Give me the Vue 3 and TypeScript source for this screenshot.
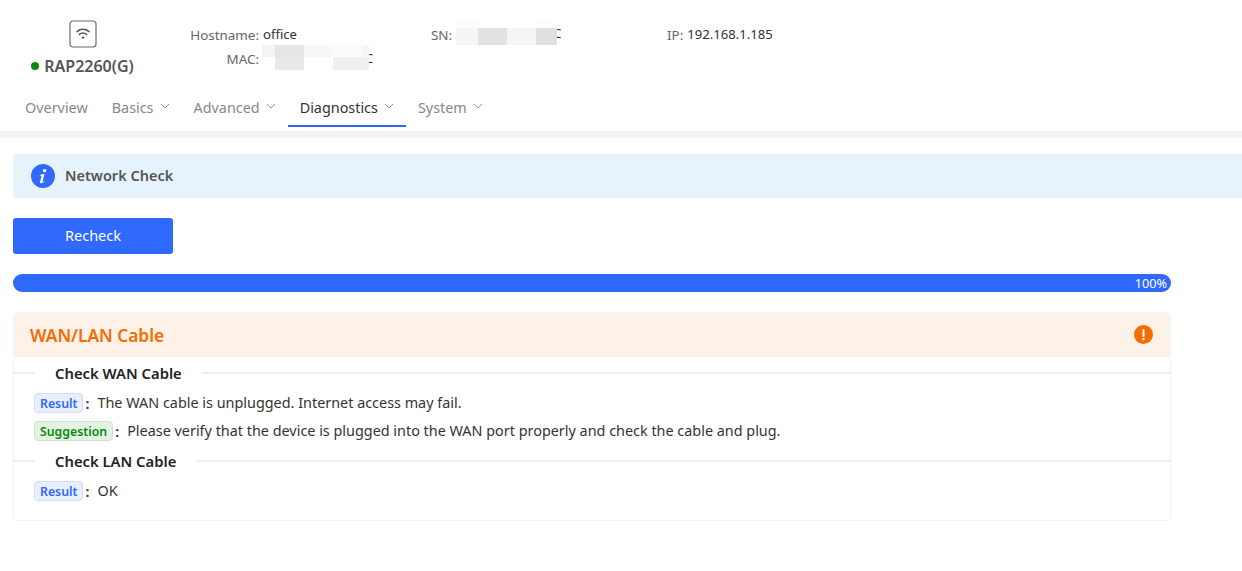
<script setup lang="ts">
const tabs = [
  { label: 'Overview', caret: false, active: false },
  { label: 'Basics', caret: true, active: false },
  { label: 'Advanced', caret: true, active: false },
  { label: 'Diagnostics', caret: true, active: true },
  { label: 'System', caret: true, active: false },
]
interface Cell { x: number; y: number; w: number; h: number; c: string }
const macCells: Cell[] = [
  { x: 0, y: 0, w: 13, h: 12, c: '#f4f4f4' },
  { x: 13, y: 0, w: 29, h: 12, c: '#e6e6e6' },
  { x: 13, y: 12, w: 29, h: 13, c: '#e9e9e9' },
  { x: 42, y: 0, w: 29, h: 12, c: '#f8f8f8' },
  { x: 71, y: 0, w: 29, h: 12, c: '#fcfcfc' },
  { x: 71, y: 12, w: 36, h: 13, c: '#efefef' },
  { x: 100, y: 0, w: 7, h: 12, c: '#f6f6f6' },
]
const snCells: Cell[] = [
  { x: 0, y: 0, w: 22, h: 8, c: '#fcfcfc' },
  { x: 0, y: 8, w: 22, h: 17, c: '#f5f5f5' },
  { x: 22, y: 8, w: 29, h: 17, c: '#e2e2e2' },
  { x: 51, y: 8, w: 29, h: 17, c: '#f5f5f5' },
  { x: 80, y: 0, w: 21, h: 8, c: '#fdfdfd' },
  { x: 80, y: 8, w: 21, h: 17, c: '#e0e0e0' },
]
const cellStyle = (c: Cell) => ({
  left: c.x + 'px', top: c.y + 'px', width: c.w + 'px', height: c.h + 'px', background: c.c,
})
</script>

<template>
  <div class="page">
    <header class="top">
      <div class="info">
        <div class="device">
          <span class="device-icon">
            <svg width="28" height="28" viewBox="0 0 28 28" fill="none">
              <rect x="1" y="1" width="26" height="26" rx="3" stroke="#6b6b6b" stroke-width="1.2" />
              <path d="M8 11.6c3.6-3 8.4-3 12 0" stroke="#555" stroke-width="1.6" stroke-linecap="round" />
              <path d="M10.4 14.4c2.2-1.7 5-1.7 7.2 0" stroke="#555" stroke-width="1.6" stroke-linecap="round" />
              <circle cx="14" cy="17.6" r="1.2" fill="#555" />
            </svg>
          </span>
          <div class="model"><i class="dot"></i>RAP2260(G)</div>
        </div>
        <div class="fields">
          <div class="field f-host"><span class="k">Hostname:</span><span class="v">office</span></div>
          <div class="field f-sn">
            <span class="k">SN:</span>
            <span class="mosaic sn"><b>C</b><i v-for="(c, n) in snCells" :key="n" :style="cellStyle(c)"></i></span>
          </div>
          <div class="field f-ip"><span class="k">IP:</span><span class="v">192.168.1.185</span></div>
          <div class="field f-mac">
            <span class="k">MAC:</span>
            <span class="mosaic mac"><b>C</b><i v-for="(c, n) in macCells" :key="n" :style="cellStyle(c)"></i></span>
          </div>
        </div>
      </div>
      <nav class="tabs">
        <div v-for="t in tabs" :key="t.label" class="tab" :class="{ active: t.active }">
          {{ t.label }}
          <svg v-if="t.caret" class="caret" width="10" height="6" viewBox="0 0 10 6" fill="none">
            <path d="M1 1l4 4 4-4" stroke="currentColor" stroke-width="1" />
          </svg>
        </div>
      </nav>
    </header>
    <div class="strip"></div>
    <main class="content">
      <div class="alert">
        <svg width="24" height="24" viewBox="0 0 24 24">
          <circle cx="12" cy="12" r="12" fill="#2f69fe" />
          <circle cx="13.6" cy="6.6" r="1.7" fill="#fff" />
          <path d="M9.6 10.6l3.9-.6-2 7.4c-.1.5.3.6.7.3l1.2-1 .4.4c-1.100 1.300-2.200 2.200-3.600 2.200-1 0-1.400-.7-1.100-1.800l1.500-5.400-1.100.1z" fill="#fff" />
        </svg>
        <span>Network Check</span>
      </div>
      <button class="btn" type="button">Recheck</button>
      <div class="progress"><span>100%</span></div>
      <section class="card">
        <div class="card-head">
          <span>WAN/LAN Cable</span>
          <svg width="19" height="19" viewBox="0 0 19 19">
            <circle cx="9.500" cy="9.500" r="9.500" fill="#f56c00" />
            <rect x="8.500" y="4" width="2" height="8" rx="1" fill="#fff" />
            <circle cx="9.500" cy="14" r="1.200" fill="#fff" />
          </svg>
        </div>
        <div class="legend"><span>Check WAN Cable</span></div>
        <div class="line">
          <span class="tag blue">Result</span><b class="colon">:</b>
          <span>The WAN cable is unplugged. Internet access may fail.</span>
        </div>
        <div class="line">
          <span class="tag green">Suggestion</span><b class="colon">:</b>
          <span>Please verify that the device is plugged into the WAN port properly and check the cable and plug.</span>
        </div>
        <div class="legend second"><span>Check LAN Cable</span></div>
        <div class="line last">
          <span class="tag blue">Result</span><b class="colon">:</b>
          <span>OK</span>
        </div>
      </section>
    </main>
  </div>
</template>

<style>
html, body { margin: 0; background: #fff; }
</style>

<style scoped>
.page {
  width: 1242px;
  height: 571px;
  overflow: hidden;
  background: #fff;
  font-family: "Noto Sans", "Noto Sans CJK SC", sans-serif;
  font-size: 14px;
  color: #333;
}
.top { height: 131px; display: flex; flex-direction: column; box-sizing: border-box; padding-top: 20px; }
.info { display: flex; height: 68px; }
.device { width: 165px; display: flex; flex-direction: column; align-items: center; }
.device-icon { display: block; height: 28px; }
.model { margin-top: 8px; font-size: 16px; font-weight: 600; color: #555; line-height: 20px; display: flex; align-items: center; }
.dot { width: 8px; height: 8px; border-radius: 50%; background: #0a8a0a; margin-right: 5px; }
.fields {
  display: grid;
  grid-template-columns: 266px 236px auto;
  grid-template-rows: 24px 25px;
  align-content: start;
  margin-top: 2px;
}
.field { display: flex; line-height: 24px; font-size: 13.100px; color: #333; white-space: nowrap; }
.k { color: #666; width: 94px; text-align: right; margin-right: 4px; flex: none; position: relative; top: 1px; font-size: 13.400px; }
.f-sn .k, .f-ip .k { width: auto; margin-right: 4px; }
.f-mac { grid-column: 1; grid-row: 2; }
.mosaic { position: relative; display: block; height: 25px; flex: none; top: -2px; }
.mosaic i { position: absolute; display: block; }
.mosaic b { position: absolute; top: 1px; font-weight: 400; font-size: 13px; line-height: 25px; }
.mac { width: 111px; margin-left: -1px; top: -1px; }
.mac b { left: 103px; }
.sn { width: 105px; }
.sn b { left: 97px; }
.tabs { display: flex; padding-left: 13px; height: 38px; }
.tab {
  display: flex;
  align-items: center;
  height: 35px;
  padding: 2px 12px 0;
  color: #888;
  font-size: 14.380px;
  border-bottom: 2px solid transparent;
  white-space: nowrap;
}
.tab.active { color: #333; border-bottom-color: #2f69fe; }
.caret { margin-left: 6px; margin-bottom: 3px; color: #999; }
.strip { height: 7px; background: #f2f2f2; }
.content { padding: 16px 0 0 13px; }
.alert {
  height: 44px;
  background: #e6f3fd;
  border-radius: 4px 0 0 4px;
  display: flex;
  align-items: center;
  gap: 10px;
  padding-left: 18px;
  font-size: 14.500px;
  font-weight: 600;
  color: #555;
}
.alert span { position: relative; top: -1px; }
.btn {
  display: block;
  margin-top: 20px;
  width: 160px;
  height: 36px;
  background: #2f69fe;
  color: #fff;
  border: 0;
  border-radius: 3px;
  font: inherit;
  font-size: 14.500px;
  padding: 0 0 2px;
}
.progress {
  margin-top: 20px;
  width: 1158px;
  height: 18px;
  border-radius: 9px;
  background: #2f69fe;
  color: #fff;
  font-size: 12.700px;
  line-height: 18px;
  text-align: right;
  padding-right: 4px;
  box-sizing: border-box;
}
.card {
  margin-top: 20px;
  width: 1158px;
  height: 209px;
  box-sizing: border-box;
  border: 1px solid #f2f3f7;
  border-radius: 6px;
  overflow: hidden;
}
.card-head {
  height: 45px;
  margin: -1px -1px 0;
  background: #fef1e7;
  display: flex;
  align-items: center;
  justify-content: space-between;
  padding: 0 18px 0 17px;
  color: #f56c00;
  font-size: 17.300px;
  font-weight: 600;
}
.card-head span { position: relative; top: 1px; }
.legend {
  display: flex;
  align-items: center;
  height: 32px;
  font-size: 14.800px;
  font-weight: 600;
  color: #222;
  padding-left: 21px;
  background: linear-gradient(#eeeeee, #eeeeee) 0 15px / 100% 2px no-repeat;
}
.legend span { background: #fff; padding: 0 20px; margin-top: -1px; }
.legend.second { margin-top: 1px; height: 30px; background-position: 0 14px; }
.line { display: flex; align-items: center; height: 28px; padding-left: 20px; font-size: 14.400px; color: #333; white-space: nowrap; }
.line > span:last-child { position: relative; top: -1px; }
.last { margin-top: 1px; }
.tag {
  box-sizing: border-box;
  height: 20px;
  line-height: 19px;
  padding: 0 5px;
  border-radius: 4px;
  font-size: 12.300px;
  font-weight: 600;
  border: 1px solid;
}
.blue { background: #e9effe; border-color: #d2deff; color: #2f69fe; }
.green { background: #e3f3e3; border-color: #c9e6c9; color: #0a8a0a; }
.colon { margin: 0 8px 0 2px; font-weight: 600; color: #333; }
</style>
